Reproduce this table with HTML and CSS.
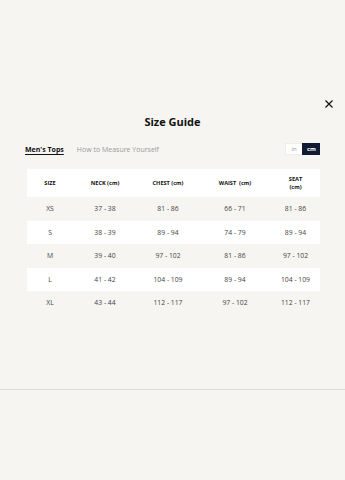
FILE: index.html
```html
<!DOCTYPE html>
<html lang="en">
<head>
<meta charset="utf-8">
<link rel="stylesheet" href="styles.css">
</head>
<body>
<div class="modal">
  <div class="close-row">
    <button class="close" aria-label="Close">
      <svg width="8" height="8" viewBox="0 0 8 8"><path d="M0.5 0.5L7.5 7.5M7.5 0.5L0.5 7.5" stroke="#111" stroke-width="1.2" fill="none"/></svg>
    </button>
  </div>
  <h1 class="title">Size Guide</h1>
  <div class="tabs">
    <span class="tab active">Men's Tops</span>
    <span class="tab">How to Measure Yourself</span>
    <div class="units">
      <span class="unit">in</span>
      <span class="unit on">cm</span>
    </div>
  </div>
  <div class="table">
    <div class="row head">
      <span>SIZE</span><span>NECK (cm)</span><span>CHEST (cm)</span><span>WAIST &nbsp;(cm)</span><span>SEAT<br>(cm)</span>
    </div>
    <div class="row"><span>XS</span><span>37 - 38</span><span>81 - 86</span><span>66 - 71</span><span>81 - 86</span></div>
    <div class="row alt"><span>S</span><span>38 - 39</span><span>89 - 94</span><span>74 - 79</span><span>89 - 94</span></div>
    <div class="row"><span>M</span><span>39 - 40</span><span>97 - 102</span><span>81 - 86</span><span>97 - 102</span></div>
    <div class="row alt"><span>L</span><span>41 - 42</span><span>104 - 109</span><span>89 - 94</span><span>104 - 109</span></div>
    <div class="row"><span>XL</span><span>43 - 44</span><span>112 - 117</span><span>97 - 102</span><span>112 - 117</span></div>
  </div>
</div>
<div class="rule"></div>
</body>
</html>
```
FILE: styles.css
```css
html, body { margin: 0; padding: 0; }
body {
  background: #f6f5f2;
  font-family: "Open Sans", "Liberation Sans", sans-serif;
  color: #222;
  width: 345px;
  height: 480px;
  overflow: hidden;
}
.modal {
  padding: 97px 0 0 0;
  height: 291px;
}
.close-row {
  display: flex;
  justify-content: flex-end;
  padding-right: 12px;
  height: 14px;
}
.close {
  background: none;
  border: 0;
  padding: 0;
  width: 8px;
  height: 8px;
  display: flex;
  margin-top: 3px;
}
.title {
  margin: 0;
  text-align: center;
  font-size: 11px;
  font-weight: 700;
  color: #111;
  line-height: 16px;
  margin-top: 3px;
}
.tabs {
  display: flex;
  align-items: center;
  padding: 0 25px;
  margin-top: 12px;
  height: 14px;
}
.tab {
  font-size: 7px;
  color: #9a9a9a;
  margin-right: 13px;
}
.tab.active {
  color: #111;
  font-weight: 700;
  text-decoration: underline;
  text-underline-offset: 1.5px;
}
.units {
  margin-left: auto;
  display: flex;
  height: 12px;
}
.unit {
  font-size: 6px;
  width: 16px;
  display: flex;
  align-items: center;
  justify-content: center;
  background: #fff;
  color: #999;
  border: 1px solid #eee;
  border-right: 0;
}
.unit.on {
  background: #131a33;
  color: #fff;
  font-weight: 700;
  border-color: #131a33;
  width: 17px;
}
.table {
  margin: 13px 25px 0 27px;
}
.row {
  display: grid;
  grid-template-columns: 46px 64px 62px 72px 49px;
  height: 23.5px;
  align-items: center;
  font-size: 6.8px;
  color: #444;
}
.row span { text-align: center; }
.row.head {
  background: #fff;
  height: 28px;
  font-size: 5.6px;
  font-weight: 700;
  color: #111;
  line-height: 8px;
}
.row.alt { background: #fff; }
.rule {
  height: 1px;
  background: #dcdcda;
  margin-top: 1px;
}
```
